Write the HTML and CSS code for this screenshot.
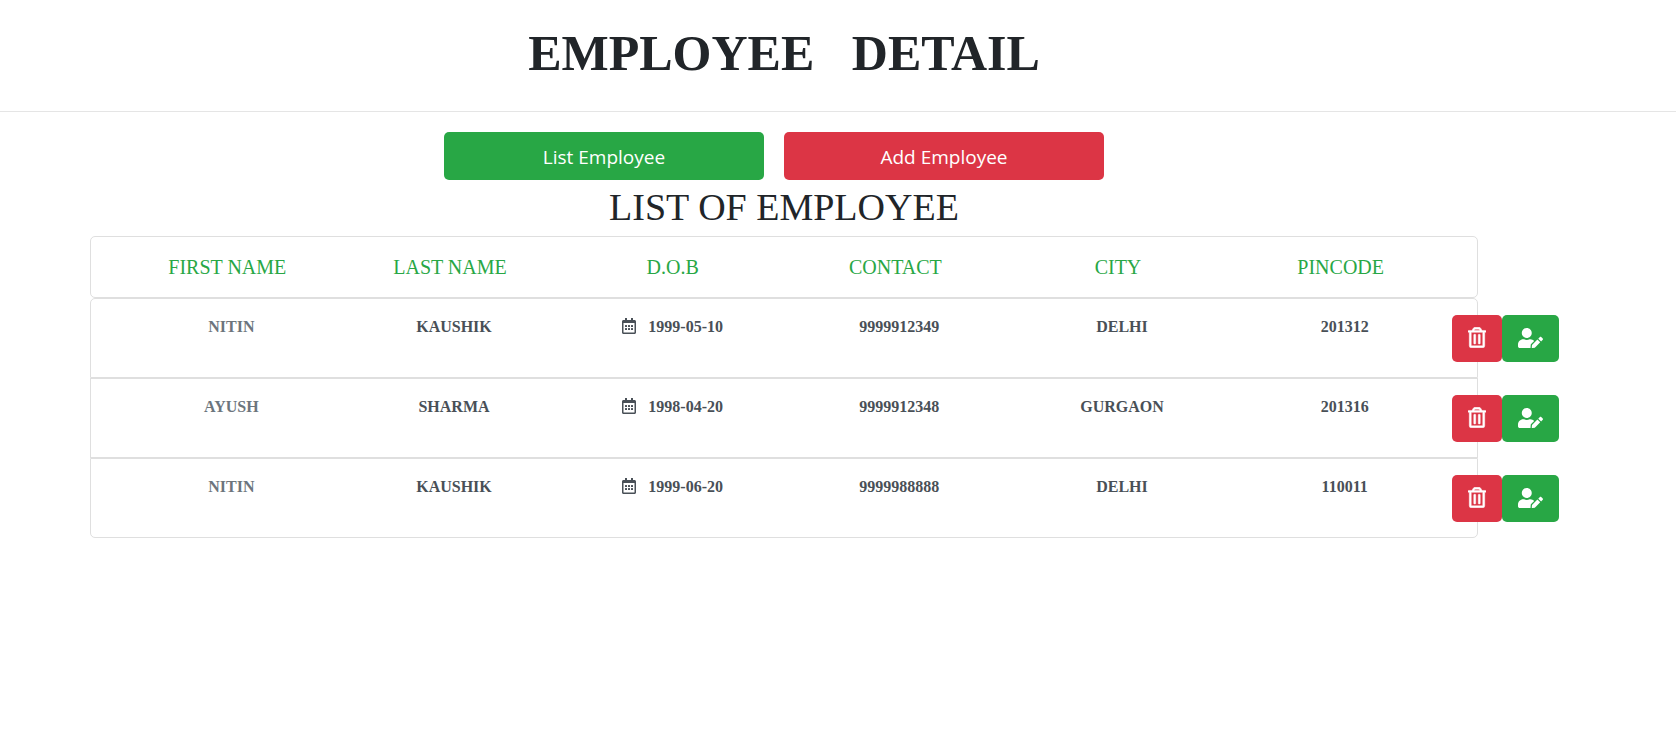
FILE: index.html
```html
<!DOCTYPE html>
<html lang="en">
<head>
<meta charset="utf-8">
<meta name="viewport" content="width=device-width, initial-scale=1">
<title>Employee Detail</title>
<link rel="stylesheet" href="styles.css">
</head>
<body>
<svg class="sprite" aria-hidden="true">
  <symbol id="icon-calendar" viewBox="0 0 448 512">
    <path fill-rule="evenodd" d="M400 64h-48V12c0-6.600-5.400-12-12-12h-40c-6.600 0-12 5.400-12 12v52H160V12c0-6.600-5.400-12-12-12h-40c-6.600 0-12 5.400-12 12v52H48C21.500 64 0 85.500 0 112v352c0 26.500 21.500 48 48 48h352c26.500 0 48-21.500 48-48V112c0-26.500-21.500-48-48-48zm-6 400H54c-3.300 0-6-2.700-6-6V160h352v298c0 3.300-2.700 6-6 6z"/>
    <path d="M108 224h40a12 12 0 0 1 12 12v40a12 12 0 0 1-12 12h-40a12 12 0 0 1-12-12v-40a12 12 0 0 1 12-12zM204 224h40a12 12 0 0 1 12 12v40a12 12 0 0 1-12 12h-40a12 12 0 0 1-12-12v-40a12 12 0 0 1 12-12zM300 224h40a12 12 0 0 1 12 12v40a12 12 0 0 1-12 12h-40a12 12 0 0 1-12-12v-40a12 12 0 0 1 12-12zM108 320h40a12 12 0 0 1 12 12v40a12 12 0 0 1-12 12h-40a12 12 0 0 1-12-12v-40a12 12 0 0 1 12-12zM204 320h40a12 12 0 0 1 12 12v40a12 12 0 0 1-12 12h-40a12 12 0 0 1-12-12v-40a12 12 0 0 1 12-12zM300 320h40a12 12 0 0 1 12 12v40a12 12 0 0 1-12 12h-40a12 12 0 0 1-12-12v-40a12 12 0 0 1 12-12z"/>
  </symbol>
  <symbol id="icon-trash" viewBox="0 0 448 512">
    <path d="M268 416h24a12 12 0 0 0 12-12V188a12 12 0 0 0-12-12h-24a12 12 0 0 0-12 12v216a12 12 0 0 0 12 12zM432 80h-82.410l-34-56.700A48 48 0 0 0 274.410 0H173.590a48 48 0 0 0-41.160 23.300L98.410 80H16A16 16 0 0 0 0 96v16a16 16 0 0 0 16 16h16v336a48 48 0 0 0 48 48h288a48 48 0 0 0 48-48V128h16a16 16 0 0 0 16-16V96a16 16 0 0 0-16-16zM171.840 50.910A6 6 0 0 1 177 48h94a6 6 0 0 1 5.150 2.910L293.610 80H154.390zM368 464H80V128h288zm-212-48h24a12 12 0 0 0 12-12V188a12 12 0 0 0-12-12h-24a12 12 0 0 0-12 12v216a12 12 0 0 0 12 12z"/>
  </symbol>
  <symbol id="icon-user-edit" viewBox="0 0 640 512">
    <path d="M224 256c70.700 0 128-57.300 128-128S294.700 0 224 0 96 57.300 96 128s57.300 128 128 128zm89.600 32h-16.700c-22.200 10.200-46.900 16-72.900 16s-50.600-5.800-72.900-16h-16.700C60.200 288 0 348.200 0 422.400V464c0 26.500 21.500 48 48 48h274.900c-2.400-6.800-3.400-14-2.600-21.300l6.800-60.900 1.200-11.100 7.900-7.900 77.300-77.300c-24.500-27.700-60-45.500-99.900-45.500zm45.300 145.300l-6.800 61c-1.100 10.200 7.500 18.800 17.600 17.600l60.900-6.800 137.900-137.900-71.700-71.700-137.900 137.800zM633 268.900L595.100 231c-9.300-9.300-24.500-9.300-33.800 0l-37.800 37.800-4.100 4.100 71.800 71.700 41.800-41.800c9.300-9.400 9.300-24.500 0-33.900z"/>
  </symbol>
</svg>

<header class="page-header">
  <h1 class="page-title">EMPLOYEE &nbsp; DETAIL</h1>
</header>

<main class="content">
  <nav class="tabs" aria-label="Employee actions">
    <button type="button" class="btn btn-success tab">List Employee</button>
    <button type="button" class="btn btn-danger tab">Add Employee</button>
  </nav>

  <h2 class="list-title">LIST OF EMPLOYEE</h2>

  <table class="employees">
    <thead>
      <tr class="row head-row">
        <th scope="col">FIRST NAME</th>
        <th scope="col">LAST NAME</th>
        <th scope="col">D.O.B</th>
        <th scope="col">CONTACT</th>
        <th scope="col">CITY</th>
        <th scope="col">PINCODE</th>
      </tr>
    </thead>
    <tbody>
      <tr class="row data-row">
        <td class="first-name">NITIN</td>
        <td>KAUSHIK</td>
        <td class="dob"><svg class="icon-calendar" aria-hidden="true"><use href="#icon-calendar"/></svg>1999-05-10</td>
        <td>9999912349</td>
        <td>DELHI</td>
        <td>201312</td>
        <td class="actions">
          <button type="button" class="btn btn-danger action" aria-label="Delete employee"><svg class="icon-trash" aria-hidden="true"><use href="#icon-trash"/></svg></button>
          <button type="button" class="btn btn-success action" aria-label="Edit employee"><svg class="icon-edit" aria-hidden="true"><use href="#icon-user-edit"/></svg></button>
        </td>
      </tr>
      <tr class="row data-row">
        <td class="first-name">AYUSH</td>
        <td>SHARMA</td>
        <td class="dob"><svg class="icon-calendar" aria-hidden="true"><use href="#icon-calendar"/></svg>1998-04-20</td>
        <td>9999912348</td>
        <td>GURGAON</td>
        <td>201316</td>
        <td class="actions">
          <button type="button" class="btn btn-danger action" aria-label="Delete employee"><svg class="icon-trash" aria-hidden="true"><use href="#icon-trash"/></svg></button>
          <button type="button" class="btn btn-success action" aria-label="Edit employee"><svg class="icon-edit" aria-hidden="true"><use href="#icon-user-edit"/></svg></button>
        </td>
      </tr>
      <tr class="row data-row">
        <td class="first-name">NITIN</td>
        <td>KAUSHIK</td>
        <td class="dob"><svg class="icon-calendar" aria-hidden="true"><use href="#icon-calendar"/></svg>1999-06-20</td>
        <td>9999988888</td>
        <td>DELHI</td>
        <td>110011</td>
        <td class="actions">
          <button type="button" class="btn btn-danger action" aria-label="Delete employee"><svg class="icon-trash" aria-hidden="true"><use href="#icon-trash"/></svg></button>
          <button type="button" class="btn btn-success action" aria-label="Edit employee"><svg class="icon-edit" aria-hidden="true"><use href="#icon-user-edit"/></svg></button>
        </td>
      </tr>
    </tbody>
  </table>
</main>
</body>
</html>
```

FILE: styles.css
```css
*,
*::before,
*::after {
  box-sizing: border-box;
}

body {
  margin: 0;
  background: #fff;
  color: #212529;
  font-family: "Liberation Serif", "Times New Roman", serif;
  font-size: 16px;
  line-height: 24px;
}

svg {
  fill: currentColor;
}

.sprite {
  display: none;
}

.page-header {
  padding: 23px 108px 28px 0;
  border-bottom: 1px solid #e5e5e5;
  text-align: center;
}

.page-title {
  margin: 0;
  font-size: 50px;
  line-height: 60px;
  font-weight: 700;
}

.content {
  padding: 20px 198px 20px 90px;
}

.btn {
  border: 0;
  border-radius: 5px;
  color: #fff;
  cursor: pointer;
}

.btn-success {
  background: #28a745;
}

.btn-danger {
  background: #dc3545;
}

.tabs {
  display: flex;
  justify-content: center;
}

.tab {
  width: 320px;
  height: 48px;
  margin-right: 20px;
  padding: 2px 16px 0;
  font-family: "Open Sans", "Segoe UI", sans-serif;
  font-size: 19px;
  line-height: 30px;
}

.list-title {
  margin: 3px 0 5px;
  font-size: 38px;
  line-height: 48px;
  font-weight: 400;
  text-align: center;
}

.employees,
.employees thead,
.employees tbody {
  display: block;
}

.row {
  display: grid;
  grid-template-columns: repeat(6, 1fr);
  border: 1px solid #dfdfdf;
  text-align: center;
}

.row th,
.row td {
  padding: 0;
}

.head-row {
  padding: 15px 25px;
  border-radius: 5px;
  color: #28a745;
  font-size: 20px;
  line-height: 30px;
}

.head-row th {
  font-weight: 400;
}

.data-row {
  position: relative;
  min-height: 80px;
  padding: 16px 21px 16px 29px;
  color: #495057;
  font-weight: 700;
}

.data-row:first-child {
  border-radius: 5px 5px 0 0;
}

.data-row:last-child {
  border-radius: 0 0 5px 5px;
}

.first-name {
  color: #6c757d;
}

.row .dob {
  display: flex;
  align-items: center;
  justify-content: center;
  gap: 12px;
  height: 24px;
  padding-right: 8px;
}

.icon-calendar {
  width: 14px;
  height: 16px;
  margin-bottom: 2px;
}

.actions {
  position: absolute;
  top: 16px;
  left: calc(100% - 25px);
  display: flex;
}

.action {
  display: flex;
  align-items: center;
  height: 47px;
  padding: 0 16px 2px;
}

.icon-trash {
  width: 18px;
  height: 21px;
  stroke: currentColor;
  stroke-width: 12px;
  overflow: visible;
}

.icon-edit {
  width: 25px;
  height: 20px;
}
```
